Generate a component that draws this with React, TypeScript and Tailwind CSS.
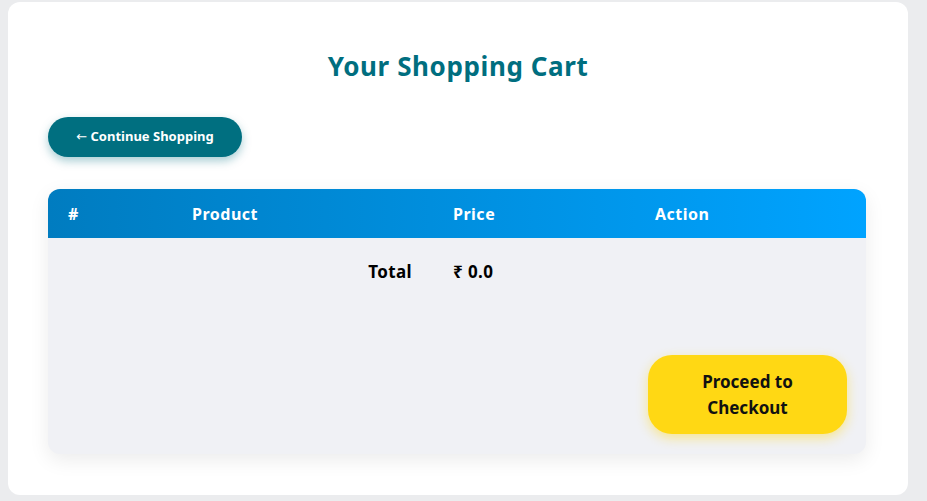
export default function App() {
  return (
    <div className="min-h-[501px] w-[927px] bg-[#ebecee] pl-[8px] pt-[2px]" style={{ fontFamily: '"Noto Sans", "Open Sans", sans-serif' }}>
      <div className="h-[493px] w-[900px] rounded-[12px] bg-white px-[40px] pt-[48px]">
        <h1 className="text-center text-[26px] font-bold leading-[32px] tracking-[0.6px] text-[#006e7f]">Your Shopping Cart</h1>
        <button className="mt-[35px] h-[40px] w-[194px] rounded-full bg-[#006f80] text-[13px] font-bold text-white shadow-[0_4px_10px_rgba(0,111,128,0.35)]">
          <span className="font-normal" style={{ fontFamily: '"DejaVu Sans", sans-serif' }}>←</span> Continue Shopping
        </button>
        <div className="mt-[32px] w-[818px] overflow-hidden rounded-[12px] bg-[#f0f1f5] shadow-[0_6px_20px_rgba(0,0,0,0.08)]">
          <div className="flex h-[49px] items-center bg-gradient-to-r from-[#007cc0] to-[#00a3ff] text-[16px] font-bold tracking-[0.5px] text-white">
            <div className="w-[124px] pl-[20px]">#</div>
            <div className="w-[261px] pl-[20px]">Product</div>
            <div className="w-[202px] pl-[20px]">Price</div>
            <div className="flex-1 pl-[20px]">Action</div>
          </div>
          <div className="flex h-[67px] items-center pt-[1px] text-[17px] font-bold tracking-[0.4px] text-black">
            <div className="w-[385px] pr-[21px] text-right">Total</div>
            <div className="pl-[20px]">₹ 0.0</div>
          </div>
          <div className="flex justify-end pb-[20px] pr-[19px] pt-[50px]">
            <button className="h-[79px] w-[199px] rounded-[24px] bg-[#ffd814] px-[36px] text-[17px] font-bold leading-[26px] text-[#111] shadow-[0_4px_12px_rgba(255,216,20,0.45)]">
              Proceed to Checkout
            </button>
          </div>
        </div>
      </div>
    </div>
  );
}
